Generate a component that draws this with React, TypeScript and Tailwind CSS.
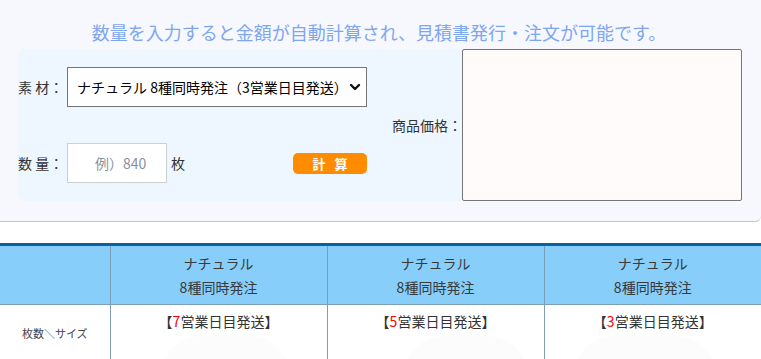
import React from "react";

const font = { fontFamily: '"Noto Sans CJK JP", "Noto Sans", sans-serif' };

function Blob({ w, ml }: { w: number; ml: number }) {
  return (
    <div
      className="h-[40px] rounded-t-[48px] bg-[#fcfcfc] mt-[3px]"
      style={{ width: w, marginLeft: ml }}
    />
  );
}

export default function App() {
  return (
    <div className="w-[761px] h-[359px] overflow-hidden bg-white text-[#333]" style={font}>
      <div className="h-[222px] bg-[#f6f8fe] border-b border-[#c4c4c4] rounded-br-[6px] flex flex-col">
        <div className="mt-[20px] h-[24px] leading-[24px] text-[18px] text-[#7fa6f0] w-[758px] text-center">
          数量を入力すると金額が自動計算され、見積書発行・注文が可能です。
        </div>
        <div className="mt-[5px] ml-[18px] flex">
          <div className="w-[444px] h-[152px] bg-[#eef6ff] rounded-l-[8px] flex">
            <div className="w-[349px] pt-[18px] flex flex-col">
              <div className="h-[40px] flex items-center">
                <div className="w-[49px] text-[14px] whitespace-pre">素 材：</div>
                <div className="relative w-[300px] h-[40px]">
                  <select
                    className="appearance-none w-full h-full border border-[#767676] bg-white pl-[9px] text-[14px] text-black outline-none"
                    style={font}
                    defaultValue="a"
                  >
                    <option value="a">ナチュラル 8種同時発注（3営業日目発送）</option>
                  </select>
                  <svg
                    className="absolute right-[6px] top-[16px] pointer-events-none"
                    width="12"
                    height="8"
                    viewBox="0 0 12 8"
                  >
                    <path d="M2 2 L6 6 L10 2" fill="none" stroke="#111" strokeWidth="2.4" strokeLinecap="round" strokeLinejoin="round" />
                  </svg>
                </div>
              </div>
              <div className="h-[40px] mt-[36px] flex items-center">
                <div className="w-[49px] text-[14px] whitespace-pre">数 量：</div>
                <input
                  className="w-[100px] h-[40px] border border-[#cfcfcf] bg-white pl-[27px] text-[14px] outline-none placeholder:text-[#8a8fa0]"
                  style={font}
                  placeholder="例）840"
                />
                <div className="ml-[4px] text-[14px]">枚</div>
                <button
                  className="ml-auto w-[74px] h-[21px] rounded-[5px] bg-[#ff8c00] text-white text-[13px] font-bold leading-[21px] tracking-[3px] pl-[3px] whitespace-pre"
                  style={font}
                >
                  計 算
                </button>
              </div>
            </div>
            <div className="flex-1 flex items-center justify-end">
              <div className="text-[14px] whitespace-nowrap">商品価格：</div>
            </div>
          </div>
          <textarea className="w-[280px] h-[152px] border border-[#767676] rounded-[2px] bg-[#fffbfa] resize-none outline-none" />
        </div>
      </div>

      <table className="mt-[21px] w-[761px] table-fixed border-collapse border-t-[3px] border-[#0a60a0]">
        <colgroup>
          <col className="w-[110px]" />
          <col className="w-[217px]" />
          <col className="w-[217px]" />
          <col className="w-[217px]" />
        </colgroup>
        <thead>
          <tr className="bg-[#87cefa]">
            <th className="border-b border-[#7d9fb6] border-r"></th>
            {[0, 1, 2].map((i) => (
              <th
                key={i}
                className={
                  "border-b border-[#7d9fb6] py-[5px] text-[14px] font-normal leading-[24px] text-[#3a3a3a] " +
                  (i < 2 ? "border-r" : "")
                }
              >
                <div>ナチュラル</div>
                <div>8種同時発注</div>
              </th>
            ))}
          </tr>
        </thead>
        <tbody>
          <tr className="h-[100px] align-top">
            <td className="border-r border-[#7d9fb6] pt-[20px] text-center text-[11px] leading-[16px] text-[#444]">
              枚数＼サイズ
            </td>
            <td className="border-r border-[#7d9fb6] pt-[4px] text-[14px] leading-[24px] text-center">
              <div>
                【<span className="text-[#ff0000]">7</span>営業日目発送】
              </div>
              <Blob w={128} ml={50} />
            </td>
            <td className="border-r border-[#7d9fb6] pt-[4px] text-[14px] leading-[24px] text-center">
              <div>
                【<span className="text-[#ff0000]">5</span>営業日目発送】
              </div>
              <Blob w={124} ml={76} />
            </td>
            <td className="pt-[4px] text-[14px] leading-[24px] text-center">
              <div>
                【<span className="text-[#ff0000]">3</span>営業日目発送】
              </div>
              <Blob w={142} ml={29} />
            </td>
          </tr>
        </tbody>
      </table>
    </div>
  );
}
